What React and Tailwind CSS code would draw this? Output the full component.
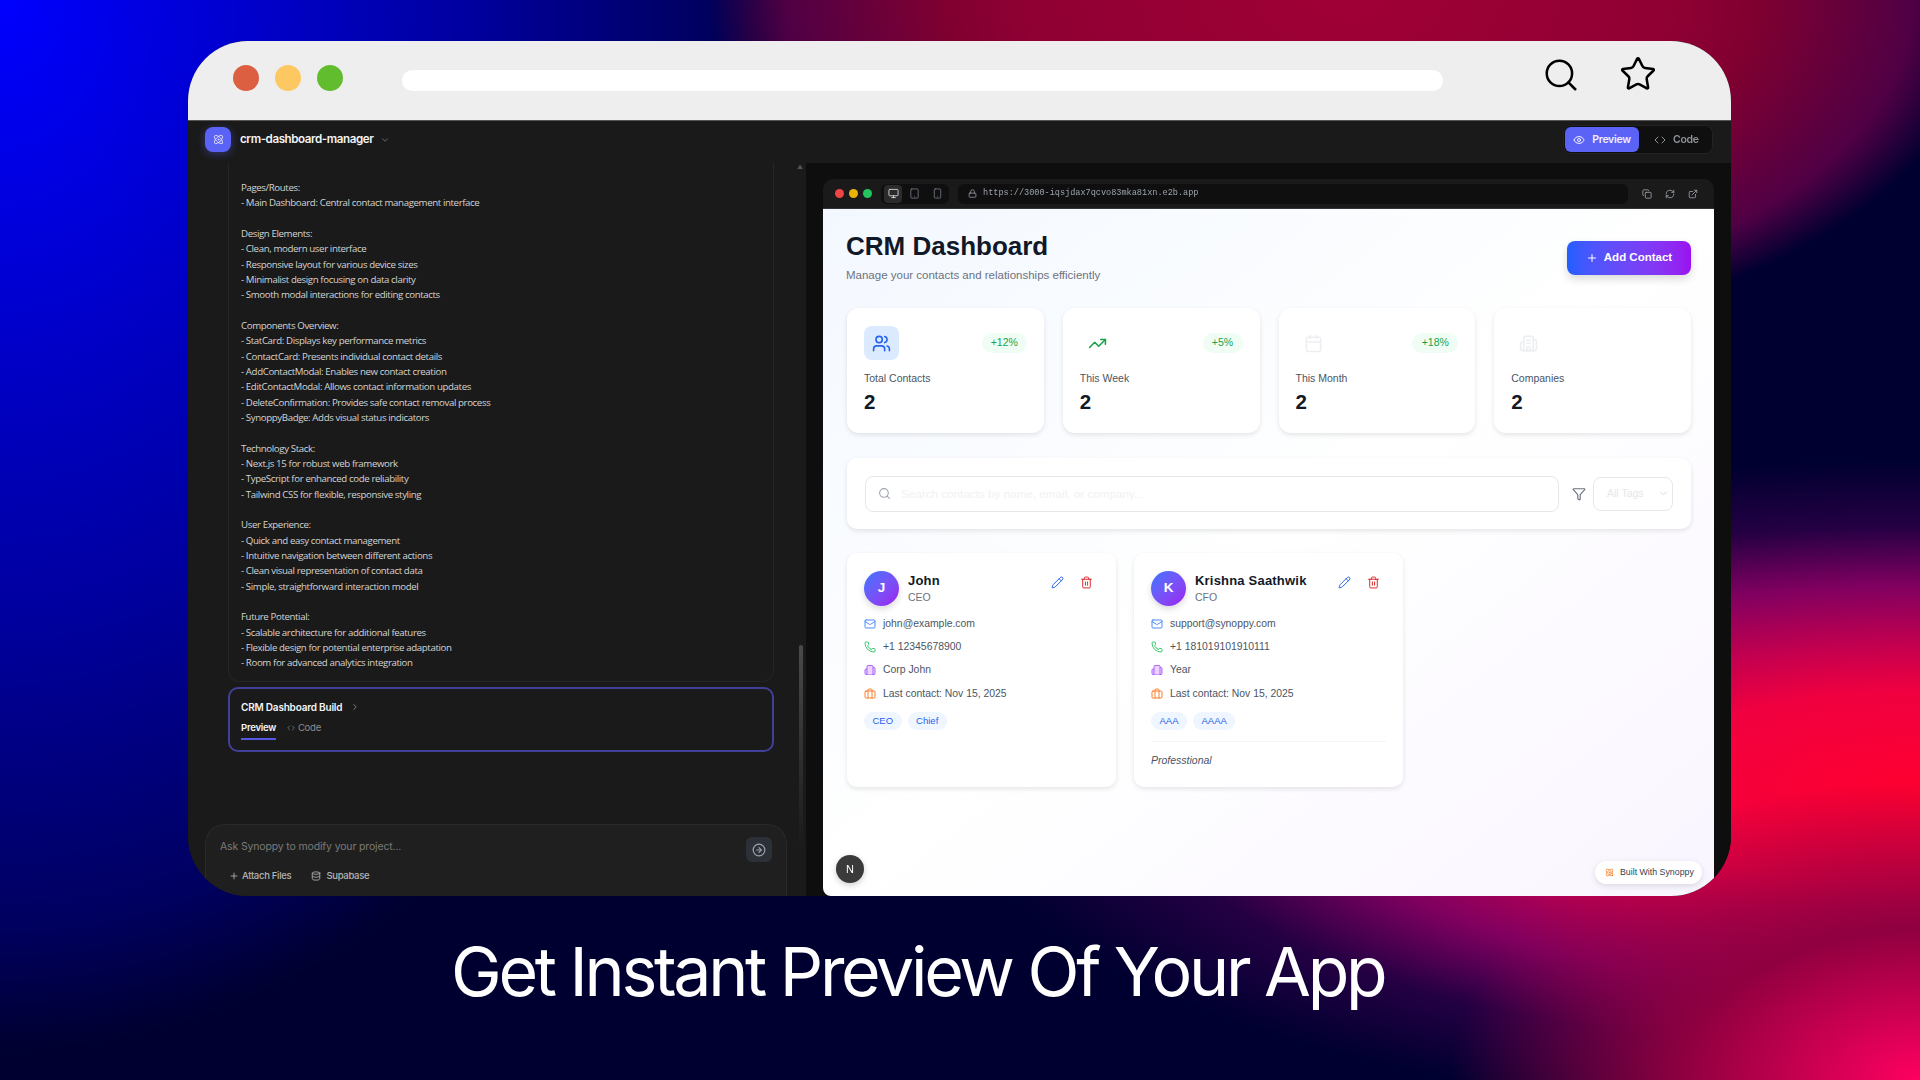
import {
  Users, TrendingUp, Calendar, Building2, Plus, Search, Filter, Pencil, Trash2, Mail, Phone, Briefcase,
  Eye, Code, Monitor, Tablet, Smartphone, Lock, Copy, RefreshCw, ExternalLink, CircleArrowRight,
  Database, ChevronDown, ChevronRight, Star, Atom,
} from 'lucide-react';

const promptLines = [
  'Pages/Routes:',
  '- Main Dashboard: Central contact management interface',
  '',
  'Design Elements:',
  '- Clean, modern user interface',
  '- Responsive layout for various device sizes',
  '- Minimalist design focusing on data clarity',
  '- Smooth modal interactions for editing contacts',
  '',
  'Components Overview:',
  '- StatCard: Displays key performance metrics',
  '- ContactCard: Presents individual contact details',
  '- AddContactModal: Enables new contact creation',
  '- EditContactModal: Allows contact information updates',
  '- DeleteConfirmation: Provides safe contact removal process',
  '- SynoppyBadge: Adds visual status indicators',
  '',
  'Technology Stack:',
  '- Next.js 15 for robust web framework',
  '- TypeScript for enhanced code reliability',
  '- Tailwind CSS for flexible, responsive styling',
  '',
  'User Experience:',
  '- Quick and easy contact management',
  '- Intuitive navigation between different actions',
  '- Clean visual representation of contact data',
  '- Simple, straightforward interaction model',
  '',
  'Future Potential:',
  '- Scalable architecture for additional features',
  '- Flexible design for potential enterprise adaptation',
  '- Room for advanced analytics integration',
];

const stats = [
  { label: 'Total Contacts', badge: '+12%', icon: Users, box: 'bg-[#dbeafe]', color: 'text-[#2563eb]', badgeW: 'w-[45px]' },
  { label: 'This Week', badge: '+5%', icon: TrendingUp, box: '', color: 'text-[#16a34a]', badgeW: 'w-[40px]' },
  { label: 'This Month', badge: '+18%', icon: Calendar, box: '', color: 'text-[#eceef1]', badgeW: 'w-[46px]' },
  { label: 'Companies', badge: null, icon: Building2, box: '', color: 'text-[#eceef1]', badgeW: '' },
];

const contacts = [
  {
    initial: 'J', name: 'John', role: 'CEO', email: 'john@example.com', phone: '+1 12345678900',
    company: 'Corp John', tags: ['CEO', 'Chief'],
  },
  {
    initial: 'K', name: 'Krishna Saathwik', role: 'CFO', email: 'support@synoppy.com', phone: '+1 181019101910111',
    company: 'Year', tags: ['AAA', 'AAAA'], note: 'Professtional',
  },
];

function StatCard({ stat }) {
  const Icon = stat.icon;
  return (
    <div className="h-[125px] rounded-xl bg-white px-[17px] pt-[18px] shadow-[0_2px_5px_rgba(0,0,0,0.1)]">
      <div className="flex h-[34px] items-center justify-between">
        <div className={`flex h-[34px] w-[35px] items-center justify-center rounded-lg ${stat.box}`}>
          <Icon className={`h-[19px] w-[19px] ${stat.color}`} strokeWidth={2} />
        </div>
        {stat.badge && (
          <span className={`flex h-5 ${stat.badgeW} items-center justify-center rounded-full bg-[#f0fdf4] text-[10.5px] text-[#16a34a]`}>
            {stat.badge}
          </span>
        )}
      </div>
      <p className="mt-[11px] text-[10.5px] leading-[14px] text-[#4b5563]">{stat.label}</p>
      <p className="mt-[3px] text-[20.5px] font-bold leading-[28px] text-[#111827]">2</p>
    </div>
  );
}

function ContactRow({ icon: Icon, color, text }) {
  return (
    <div className="flex h-[23.3px] items-center gap-[7px] text-[10.4px] text-[#4b5563]">
      <Icon className={`h-[12px] w-[12px] ${color}`} strokeWidth={1.8} />
      <span>{text}</span>
    </div>
  );
}

function ContactCard({ contact }) {
  return (
    <div className="h-[234px] rounded-[10px] bg-white px-[17px] pt-[18px] shadow-[0_2px_5px_rgba(0,0,0,0.1)]">
      <div className="flex h-[35px] items-start">
        <div className="flex h-[35px] w-[35px] items-center justify-center rounded-full bg-gradient-to-br from-[#2f74ff] to-[#9a10f0] text-[13.5px] font-bold text-white shadow-[0_3px_6px_rgba(0,0,0,0.15)]">
          {contact.initial}
        </div>
        <div className="ml-[9px] flex-1">
          <p className="mt-[1px] text-[13px] font-bold leading-[17px] tracking-[0.2px] text-[#111827]">{contact.name}</p>
          <p className="mt-[1px] text-[10.5px] leading-[14px] text-[#6b7280]">{contact.role}</p>
        </div>
        <div className="mr-[6px] mt-[5px] flex gap-[16px]">
          <Pencil className="h-[13px] w-[13px] text-[#2563eb]" strokeWidth={1.8} />
          <Trash2 className="h-[13px] w-[13px] text-[#dc2626]" strokeWidth={1.8} />
        </div>
      </div>
      <div className="mt-[6px]">
        <ContactRow icon={Mail} color="text-[#3b82f6]" text={contact.email} />
        <ContactRow icon={Phone} color="text-[#22c55e]" text={contact.phone} />
        <ContactRow icon={Building2} color="fill-[#e9d5ff] text-[#a855f7]" text={contact.company} />
        <ContactRow icon={Briefcase} color="text-[#f97316]" text="Last contact: Nov 15, 2025" />
      </div>
      <div className="mt-[7px] flex gap-[6px]">
        {contact.tags.map((tag) => (
          <span key={tag} className="flex h-[18px] items-center rounded-full bg-[#eff6ff] px-[8.5px] text-[9.5px] text-[#2563eb]">
            {tag}
          </span>
        ))}
      </div>
      {contact.note && (
        <p className="mt-[11px] border-t border-[#f3f4f6] pt-[11px] text-[10.5px] italic leading-[14px] text-[#4b5563]">{contact.note}</p>
      )}
    </div>
  );
}

function ChatPanel() {
  return (
    <div className="relative flex w-[618px] flex-col bg-[#1a1a1a]">
      <div className="ml-10 w-[546px] rounded-b-xl border border-t-0 border-[#262626] px-3 pb-[10px] pt-[17px] font-['Open_Sans',sans-serif] text-[9.7px] leading-[15.33px] tracking-[-0.39px] text-[#d4d4d4]">
        {promptLines.map((line, i) => (
          <p key={i} className="h-[15.33px] whitespace-nowrap">{line}</p>
        ))}
      </div>
      <div className="ml-10 mt-[5px] h-[65px] w-[546px] rounded-[10px] border-2 border-[#40409a] pl-[11px] pr-3 pt-[11px]">
        <div className="flex items-center gap-2 text-[10px] font-semibold leading-[14px] tracking-[-0.2px] text-[#f3f4f6]">
          CRM Dashboard Build
          <ChevronRight className="h-[10px] w-[10px] text-[#8b8b8b]" />
        </div>
        <div className="mt-[7px] flex gap-[11px] text-[9.6px] leading-[14px] tracking-[-0.3px]">
          <div className="relative font-semibold text-[#f3f4f6]">
            Preview
            <div className="absolute -bottom-[5px] left-0 h-[2px] w-full bg-[#5558e3]" />
          </div>
          <div className="flex items-center gap-[3px] text-[#8b8b8b]">
            <Code className="h-2 w-2" />
            Code
          </div>
        </div>
      </div>
      <div className="ml-[17px] mt-auto h-[72px] w-[582px] rounded-t-[20px] border border-b-0 border-[#2a2a2a] bg-[#1f1f1f] pl-[14px] pr-[14px] pt-[12px]">
        <div className="flex items-start justify-between">
          <p className="mt-[2px] text-[10.5px] leading-[16px] tracking-[-0.15px] text-[#7a7a7a]">Ask Synoppy to modify your project...</p>
          <div className="flex h-[25px] w-[26px] items-center justify-center rounded-md bg-[#2c3138]">
            <CircleArrowRight className="h-[14px] w-[14px] text-[#9ca3af]" />
          </div>
        </div>
        <div className="ml-[9px] mt-[7px] flex items-center text-[9.5px] font-medium leading-[14px] tracking-[-0.3px] text-[#b5b5b5]">
          <Plus className="h-[10px] w-[10px]" />
          <span className="ml-[3px]">Attach Files</span>
          <Database className="ml-[20px] h-[10px] w-[10px]" />
          <span className="ml-[5px]">Supabase</span>
        </div>
      </div>
      <div className="absolute right-[3px] top-[1px] text-[6px] leading-[6px] text-[#555]">▲</div>
      <div className="absolute right-[3px] top-[482px] h-[205px] w-[4px] rounded-full bg-gradient-to-b from-[#4b4b4b] to-[#1a1a1a]" />
    </div>
  );
}

function PreviewChrome() {
  return (
    <div className="flex h-[30px] items-center rounded-t-[10px] border-b border-[#333] bg-[#1a1a1a] pl-[12px] pr-[16px]">
      <span className="h-[9px] w-[9px] rounded-full bg-[#ef4444]" />
      <span className="ml-[5px] h-[9px] w-[9px] rounded-full bg-[#eab308]" />
      <span className="ml-[5px] h-[9px] w-[9px] rounded-full bg-[#22c55e]" />
      <div className="ml-[9px] flex h-[20px] w-[68px] items-center gap-[4px] rounded-md bg-[#0f0f0f] px-[3px]">
        <div className="flex h-[18px] w-[18px] items-center justify-center rounded bg-[#2b2b2b]">
          <Monitor className="h-[11px] w-[11px] text-[#d1d5db]" />
        </div>
        <Tablet className="ml-[2.5px] h-[11px] w-[11px] text-[#6b7280]" />
        <Smartphone className="ml-[8px] h-[11px] w-[11px] text-[#6b7280]" />
      </div>
      <div className="ml-[9px] flex h-[20px] w-[670px] items-center gap-[6px] rounded-md bg-[#0f0f0f] pl-[10px]">
        <Lock className="h-[9px] w-[9px] text-[#9ca3af]" />
        <span className="font-['Liberation_Mono',monospace] text-[8.55px] text-[#9ca3af]">https://3000-iqsjdax7qcvo83mka81xn.e2b.app</span>
      </div>
      <div className="ml-auto flex gap-[13px]">
        <Copy className="h-[10px] w-[10px] text-[#9ca3af]" />
        <RefreshCw className="h-[10px] w-[10px] text-[#9ca3af]" />
        <ExternalLink className="h-[10px] w-[10px] text-[#9ca3af]" />
      </div>
    </div>
  );
}

function PreviewPage() {
  return (
    <div className="relative flex-1 rounded-bl-[8px] bg-gradient-to-br from-[#f3f8ff] via-[#ffffff] to-[#f9f5ff] pl-[24px] pr-[23px] pt-[21px] font-['Liberation_Sans',sans-serif]">
      <div className="flex items-start justify-between">
        <div>
          <h1 className="-ml-[1px] text-[26px] font-bold leading-[32px] text-[#111827]">CRM Dashboard</h1>
          <p className="-ml-[1px] mt-[5px] text-[11.5px] leading-[16px] text-[#6b7280]">Manage your contacts and relationships efficiently</p>
        </div>
        <button className="mt-[11px] flex h-[34px] w-[124px] items-center justify-center gap-[6px] rounded-lg bg-gradient-to-r from-[#1f5eff] to-[#9a10f0] text-[11.5px] font-bold text-white shadow-[0_4px_8px_rgba(0,0,0,0.15)]">
          <Plus className="h-[12px] w-[12px]" />
          Add Contact
        </button>
      </div>
      <div className="mt-[25px] grid grid-cols-4 gap-[19px]">
        {stats.map((stat) => (
          <StatCard key={stat.label} stat={stat} />
        ))}
      </div>
      <div className="mt-[25px] flex h-[71px] items-center rounded-[10px] bg-white pl-[18px] pr-[18px] shadow-[0_2px_5px_rgba(0,0,0,0.1)]">
        <div className="flex h-[36px] flex-1 items-center rounded-lg border border-[#e5e7eb] pl-[12px]">
          <Search className="h-[13px] w-[13px] text-[#9ca3af]" />
          <span className="ml-[10px] text-[11.7px] text-[#f0f1f4]">Search contacts by name, email, or company...</span>
        </div>
        <Filter className="ml-[13px] h-[14px] w-[14px] text-[#6b7280]" />
        <div className="ml-[7px] flex h-[34px] w-[80px] items-center justify-between rounded-lg border border-[#e5e7eb] pl-[13px] pr-[3px] text-[10.5px] text-[#e5e7eb]">
          All Tags
          <ChevronDown className="h-[11px] w-[11px] text-[#d1d5db]" />
        </div>
      </div>
      <div className="mt-[24px] flex gap-[18px]">
        {contacts.map((contact) => (
          <div key={contact.name} className="w-[269px]">
            <ContactCard contact={contact} />
          </div>
        ))}
      </div>
      <div className="absolute bottom-[13px] left-[13px] flex h-[28px] w-[28px] items-center justify-center rounded-full bg-[#3a3a3a] text-[11px] text-white shadow-[0_2px_6px_rgba(0,0,0,0.2)]">
        N
      </div>
      <div className="absolute bottom-[12px] right-[12px] flex h-[23px] w-[107px] items-center rounded-full bg-white pl-[10px] text-[8.8px] text-[#374151] shadow-[0_2px_6px_rgba(0,0,0,0.12)]">
        <Atom className="h-[9px] w-[9px] text-[#f97316]" />
        <span className="ml-[6px]">Built With Synoppy</span>
      </div>
    </div>
  );
}

export default function App() {
  return (
    <div className="h-[1080px] w-[1920px] overflow-hidden bg-[radial-gradient(ellipse_470px_300px_at_1920px_1080px,#ff0060_0%,#900040_50%,rgba(128,0,64,0)_100%),radial-gradient(ellipse_960px_330px_at_1920px_790px,#ff0030_0%,#f00040_30%,#c00050_45%,#800060_62%,rgba(60,0,80,0.6)_80%,rgba(60,0,80,0)_100%),radial-gradient(ellipse_640px_350px_at_1350px_0px,#a00035_0%,#900033_50%,#800030_63%,#500045_88%,rgba(60,0,80,0)_100%),radial-gradient(ellipse_800px_1050px_at_0px_0px,#0000ff_0%,#0000a0_58%,#000060_88%,#000030_100%),linear-gradient(#000030,#000030)] pt-[41px] font-['Inter',sans-serif]">
      <div className="ml-[188px] flex h-[855px] w-[1543px] flex-col overflow-hidden rounded-[60px] bg-[#1a1a1a]">
        <div className="flex h-[80px] items-start border-b border-[#555] bg-[#eeeeee] pl-[45px]">
          <span className="mt-[24px] h-[26px] w-[26px] rounded-full bg-[#dc5f42]" />
          <span className="ml-[16px] mt-[24px] h-[26px] w-[26px] rounded-full bg-[#fdc862]" />
          <span className="ml-[16px] mt-[24px] h-[26px] w-[26px] rounded-full bg-[#62bd2e]" />
          <div className="ml-[59px] mt-[29px] h-[21px] w-[1041px] rounded-full bg-white" />
          <Search className="ml-[99px] mt-[15px] h-[38px] w-[38px] text-black" strokeWidth={1.6} />
          <Star className="ml-[39px] mt-[14px] h-[38px] w-[38px] text-black" strokeWidth={1.6} />
        </div>
        <div className="flex flex-1 flex-col blur-[0.4px]">
          <div className="h-[42px] bg-[#1a1a1a] pl-[17px] pr-[18px] pt-[4px]">
            <div className="flex h-[29px] items-center">
              <div className="flex h-[25px] w-[26px] items-center justify-center rounded-lg bg-[#5b62f6] shadow-[0_2px_8px_rgba(91,98,246,0.4)]">
                <Atom className="h-[11px] w-[11px] text-white/80" />
              </div>
              <span className="ml-[9px] text-[11.6px] font-semibold tracking-[-0.42px] text-[#f3f4f6]">crm-dashboard-manager</span>
              <ChevronDown className="ml-[7px] h-[10px] w-[10px] text-[#7a7a7a]" />
              <div className="ml-auto flex h-[29px] w-[150px] items-center rounded-lg border border-[#232323] bg-[#0f0f0f] px-[1px] text-[10.5px] font-semibold tracking-[-0.3px]">
                <div className="flex h-[25px] w-[74px] items-center justify-center gap-[7px] rounded-md bg-[#5b62f6] text-white/90">
                  <Eye className="h-[12px] w-[12px]" />
                  Preview
                </div>
                <div className="ml-[15px] flex items-center gap-[7px] text-[#8f939a]">
                  <Code className="h-[12px] w-[12px]" />
                  Code
                </div>
              </div>
            </div>
          </div>
          <div className="flex flex-1">
            <ChatPanel />
            <div className="flex flex-1 flex-col bg-[#0e0e0e] pl-[17px] pr-[17px] pt-[16px]">
              <PreviewChrome />
              <PreviewPage />
            </div>
          </div>
        </div>
      </div>
      <p className="mt-[30px] w-full pl-[451px] text-[68px] font-normal leading-[90px] tracking-[-3.3px] text-white">Get Instant Preview Of Your App</p>
    </div>
  );
}
